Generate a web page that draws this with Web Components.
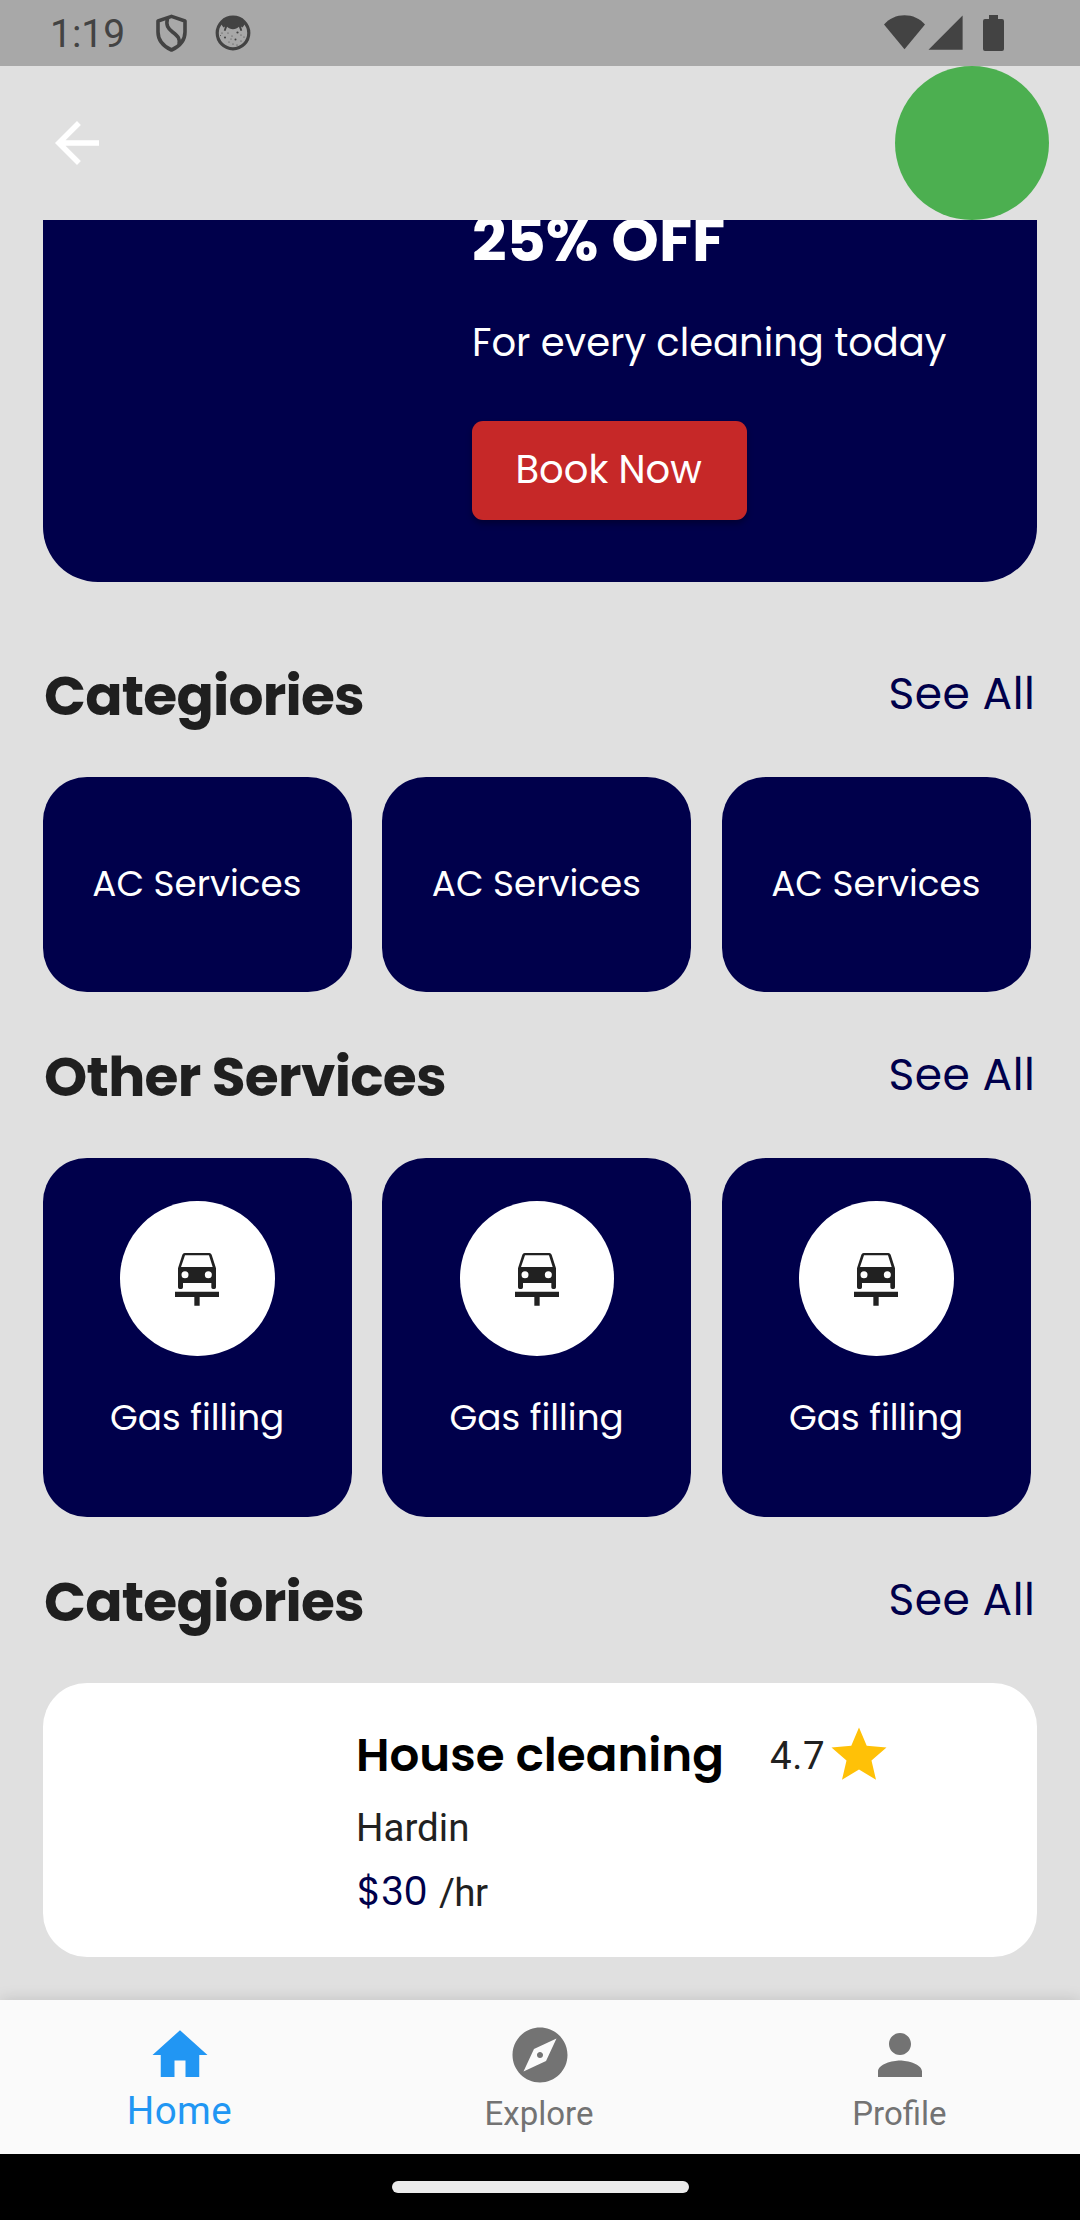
<!DOCTYPE html>
<html lang="en">
<head>
<meta charset="utf-8">
<title>Home services</title>
<style>
  html, body { margin: 0; padding: 0; }
  body { width: 1080px; height: 2220px; overflow: hidden; background: #e0e0e0; font-family: Roboto, sans-serif;
    --navy: #00004b; --ink: #1f1f1f; --display: Poppins, Inter, sans-serif; }
</style>
</head>
<body>
<service-app></service-app>
<script>
const define = (name, html, setup) => customElements.define(name, class extends HTMLElement {
  connectedCallback() {
    if (this.shadowRoot) return;
    const root = this.attachShadow({ mode: 'open' });
    const t = document.createElement('template');
    t.innerHTML = html;
    root.append(t.content.cloneNode(true));
    if (setup) setup(this, root);
  }
});

const pen = document.createElement('canvas').getContext('2d');

/* One line of text whose drawn glyphs span exactly the "fit" width. */
define('fit-text', `<style>
  :host { display: block; flex: none; white-space: nowrap; }
  span { display: inline-block; }
</style><span><slot></slot></span>`, (host, root) => {
  const span = root.querySelector('span');
  const target = +host.getAttribute('fit');
  const text = host.textContent;
  const cs = getComputedStyle(host);
  pen.font = `${cs.fontWeight} ${cs.fontSize} ${cs.fontFamily}`;
  const m = pen.measureText(text);
  const left = -m.actualBoundingBoxLeft;
  const right = m.width - m.actualBoundingBoxRight;
  const drawn = span.getBoundingClientRect().width - left - right;
  const gap = (target - drawn) / (text.length - 1);
  if (Math.abs(gap) > 0.3) span.style.letterSpacing = gap + 'px';
  span.style.marginLeft = -left + 'px';
  host.style.width = target + 'px';
});

define('status-bar', `<style>
  :host { display: flex; height: 66px; background: #a8a8a8; color: #434343; box-sizing: border-box; padding: 0 76px 0 53px; }
  fit-text { font: 400 39px/69px Roboto, sans-serif; }
  svg { display: block; flex: none; }
  .shield { margin: 14px 0 0 33px; } .face { margin: 15px 0 0 28px; }
  .wifi { margin: 15px 0 0 auto; } .cell { margin: 15px 0 0 3px; } .batt { margin: 15px 0 0 20px; }
</style>
<fit-text fit="70">1:19</fit-text>
<svg class="shield" width="31" height="38" viewBox="0 0 31 38" fill="none" stroke="currentColor" stroke-width="3.6" stroke-linejoin="round">
  <path d="M15.500 2.400 29 7V18c0 8-5.300 14.300-13.500 18C7.300 32.300 2 26 2 18V7z"/>
  <path d="M11.500 4c-1.800 7.500.5 10.500 5 14 6 4.600 7.500 6.500 6.500 12"/></svg>
<svg class="face" width="36" height="36" viewBox="0 0 36 36" fill="currentColor">
  <circle cx="18" cy="18" r="15.800" fill="none" stroke="currentColor" stroke-width="3.200"/>
  <path d="M6 9C9 5 13 2.500 18 2.500S27 5 30 9l-2.500 3.500-1.500-1 1.200 4-1.700.5-1.600-4.200C21 15 15 15 12.100 11.800L10.500 16l-1.700-.5 1.200-4-1.500 1z"/>
  <g><circle cx="10" cy="22.500" r="1"/><circle cx="22.500" cy="17.500" r="1.100"/><circle cx="20.500" cy="24.500" r="1"/><circle cx="13" cy="18" r=".6"/><circle cx="17" cy="21" r=".6"/><circle cx="26" cy="20" r=".6"/><circle cx="14" cy="27" r=".6"/><circle cx="18" cy="29" r=".6"/><circle cx="26" cy="26" r=".6"/><circle cx="7" cy="18" r=".6"/><circle cx="29" cy="22" r=".6"/><circle cx="22" cy="30" r=".6"/><circle cx="5.500" cy="20.500" r=".5"/><circle cx="16" cy="24" r=".5"/></g></svg>
<svg class="wifi" width="41" height="35" viewBox="0 0 41 35" fill="currentColor"><path d="M0 9.500C5 3.500 12.500.2 20.500.2S36 3.500 41 9.500L20.500 34.300z"/></svg>
<svg class="cell" width="35" height="35" viewBox="0 0 35 35" fill="currentColor"><path d="M34.600.5V34.700H.5z"/></svg>
<svg class="batt" width="21" height="36" viewBox="0 0 21 36" fill="currentColor"><path d="M6 0h9v4h4q2 0 2 2v28q0 2-2 2H2q-2 0-2-2V6q0-2 2-2h4z"/></svg>`);

define('app-header', `<style>
  :host { display: flex; height: 154px; align-items: center; justify-content: space-between; box-sizing: border-box; padding: 0 31px 0 44px; }
  svg { display: block; } .avatar { width: 154px; height: 154px; border-radius: 50%; background: #4caf50; }
</style>
<svg width="66" height="66" viewBox="0 0 24 24" fill="#fff"><path d="M20 11H7.830l5.590-5.590L12 4l-8 8 8 8 1.410-1.410L7.830 13H20v-2z"/></svg>
<div class="avatar"></div>`);

define('promo-card', `<style>
  :host { display: block; margin: 0 43px 29px; height: 362.300px; box-sizing: border-box; padding-left: 430px; overflow: hidden;
    background: var(--navy); border-radius: 0 0 55px 55px; color: #fff; font-family: var(--display); }
  .title { font-size: 60.500px; line-height: 40px; font-weight: 700; margin-left: 1px; }
  .sub { font-size: 38.500px; line-height: 46px; margin: 60px 0 55px 1px; }
  .btn { width: 275px; height: 99px; margin-left: -1px; border-radius: 11px; background: #c62828; box-shadow: 0 4px 6px rgba(0,0,0,.3);
    display: flex; justify-content: center; font-size: 38.500px; line-height: 98px; }
</style>
<fit-text class="title" fit="248.500">25% OFF</fit-text>
<fit-text class="sub" fit="473">For every cleaning today</fit-text>
<div class="btn"><fit-text fit="184">Book Now</fit-text></div>`);

define('section-title', `<style>
  :host { display: flex; justify-content: space-between; height: 166px; box-sizing: border-box; padding: 44.600px 48px 0 45px; font-family: var(--display); }
  .name { font-weight: 700; font-size: 55px; line-height: 80px; color: var(--ink); }
  .all { font-size: 44px; line-height: 76px; color: var(--navy); }
</style><div class="name"></div><fit-text class="all" fit="141.500">See All</fit-text>`, (host, root) => {
  const t = document.createElement('fit-text');
  t.setAttribute('fit', host.getAttribute('fit'));
  t.textContent = host.getAttribute('name');
  root.querySelector('.name').append(t);
});

define('card-row', `<style>
  :host { display: grid; grid-template-columns: repeat(3, 308.600px); column-gap: 30.900px; padding-left: 43px; }
</style><slot></slot>`);

define('category-card', `<style>
  :host { display: flex; justify-content: center; height: 215px; border-radius: 44px; background: var(--navy); color: #fff;
    font-family: var(--display); font-size: 35.750px; line-height: 214px; }
</style><fit-text fit="208">AC Services</fit-text>`);

define('service-card', `<style>
  :host { display: flex; flex-direction: column; align-items: center; height: 359px; box-sizing: border-box; padding-top: 43px;
    border-radius: 44px; background: var(--navy); color: #fff; font-family: var(--display); font-size: 35.750px; line-height: 50px; }
  .disc { width: 154.500px; height: 154.500px; border-radius: 50%; background: #fff; display: flex; align-items: center; justify-content: center; margin-bottom: 37px; }
  svg { display: block; margin-top: 2px; }
</style>
<div class="disc"><svg width="44" height="52.670" viewBox="76 189 132 158" fill="#212121">
  <path fill-rule="evenodd" d="M105 189h74q5 0 7 5l13 41v57q0 5-5 5h-4q-5 0-5-5v-13H100v13q0 5-5 5h-5q-5 0-5-5v-57l13-41q2-5 7-5zM106 196 94 231h95l-11-35zM106 243.500a10.500 10.500 0 1 0 0 21 10.500 10.500 0 0 0 0-21zm70 0a10.500 10.500 0 1 0 0 21 10.500 10.500 0 0 0 0-21z"/>
  <path d="M76 305h132v16h-58v26h-16v-26H76z"/></svg></div>
<fit-text fit="172.500">Gas filling</fit-text>`);

define('provider-card', `<style>
  :host { display: block; height: 274px; margin: 0 43px; box-sizing: border-box; padding: 38.500px 0 0 316px; border-radius: 44px; background: #fff;
    color: #212121; font: 400 38.500px/50px Roboto, sans-serif; }
  .top { display: flex; height: 66px; align-items: center; margin-bottom: 15px; }
  .name { font: 600 46.750px/66px var(--display); color: #000; }
  .rate { margin: 2px 3px 0 48px; }
  .price { display: flex; margin-top: 13px; }
  .sum { color: var(--navy); font: 400 38.500px/51px var(--display); }
  .per { margin: 2px 0 0 13px; }
  svg { display: block; }
</style>
<div class="top"><fit-text class="name" fit="364">House cleaning</fit-text><fit-text class="rate" fit="52">4.7</fit-text>
<svg width="66" height="66" viewBox="0 0 24 24" fill="#ffc107"><path d="M12 17.270 18.180 21l-1.640-7.030L22 9.240l-7.190-.61L12 2 9.190 8.630 2 9.240l5.460 4.730L5.820 21z"/></svg></div>
<fit-text fit="109">Hardin</fit-text>
<div class="price"><fit-text class="sum" fit="67">$30</fit-text><fit-text class="per" fit="49">/hr</fit-text></div>`);

define('nav-item', `<style>
  :host { display: flex; flex: 1; flex-direction: column; align-items: center; padding-top: 21.500px; color: #737373; font: 400 33px/44px Roboto, sans-serif; }
  :host([active]) { color: #2196f3; font-size: 38.500px; }
  svg { display: block; margin-bottom: 4px; } :host([active]) svg { margin-bottom: 1px; }
</style><svg width="66" height="66" viewBox="0 0 24 24" fill="currentColor"><path/></svg>`, (host, root) => {
  root.querySelector('path').setAttribute('d', host.getAttribute('icon'));
  const t = document.createElement('fit-text');
  t.setAttribute('fit', host.getAttribute('fit'));
  t.textContent = host.getAttribute('label');
  root.append(t);
});

define('bottom-nav', `<style>
  :host { display: flex; height: 154px; background: #fafafa; box-shadow: 0 -1px 14px rgba(0,0,0,.13); position: relative; }
</style>
<nav-item active label="Home" fit="100.500" icon="M10 20v-6h4v6h5v-8h3L12 3 2 12h3v8z"></nav-item>
<nav-item label="Explore" fit="107" icon="M12 10.900c-.61 0-1.100.49-1.100 1.100s.49 1.100 1.100 1.100c.61 0 1.100-.49 1.100-1.100s-.49-1.100-1.100-1.100zM12 2C6.480 2 2 6.480 2 12s4.480 10 10 10 10-4.480 10-10S17.520 2 12 2zm2.190 12.190L6 18l3.810-8.190L18 6l-3.810 8.190z"></nav-item>
<nav-item label="Profile" fit="91.500" icon="M12 12c2.210 0 4-1.790 4-4s-1.790-4-4-4-4 1.790-4 4 1.790 4 4 4zm0 2c-2.670 0-8 1.340-8 4v2h16v-2c0-2.660-5.330-4-8-4z"></nav-item>`);

define('gesture-bar', `<style>
  :host { display: flex; height: 66px; background: #000; align-items: center; justify-content: center; position: relative; }
  div { width: 297px; height: 11.500px; border-radius: 6px; background: #ebebeb; }
</style><div></div>`);

define('service-app', `<style>
  :host { display: flex; flex-direction: column; width: 1080px; height: 2220px; background: #e0e0e0; }
  main { height: 1780px; overflow: hidden; flex: none; }
</style>
<status-bar></status-bar>
<app-header></app-header>
<main>
  <promo-card></promo-card>
  <section-title name="Categiories" fit="318"></section-title>
  <card-row><category-card></category-card><category-card></category-card><category-card></category-card></card-row>
  <section-title name="Other Services" fit="400"></section-title>
  <card-row><service-card></service-card><service-card></service-card><service-card></service-card></card-row>
  <section-title name="Categiories" fit="318"></section-title>
  <provider-card></provider-card>
</main>
<bottom-nav></bottom-nav>
<gesture-bar></gesture-bar>`);
</script>
</body>
</html>
